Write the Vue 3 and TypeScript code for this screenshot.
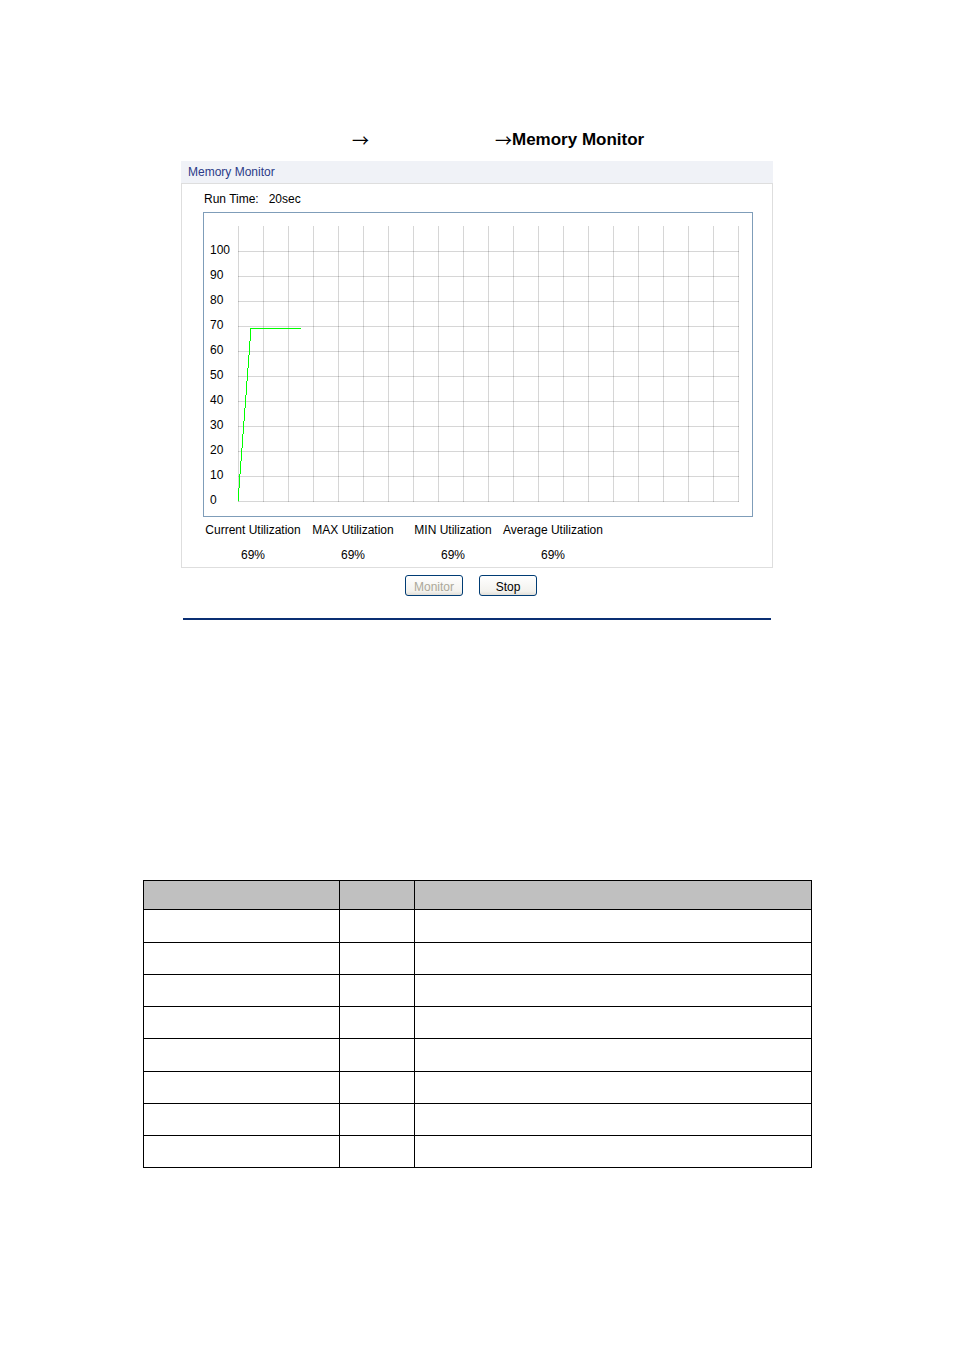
<script setup lang="ts">
interface Stat {
  label: string
  value: string
}

interface Bar {
  x: number
  y: number
  width: number
  height: number
}

const stats: Stat[] = [
  { label: 'Current Utilization', value: '69%' },
  { label: 'MAX Utilization', value: '69%' },
  { label: 'MIN Utilization', value: '69%' },
  { label: 'Average Utilization', value: '69%' },
]

const step = 25
const left = 34
const bottom = 288
const columns = Array.from({ length: 21 }, (_, i) => left + i * step)
const levels = Array.from({ length: 11 }, (_, i) => ({ value: i * 10, y: bottom - i * step }))

const samples: number[] = [0, 69, 69, 69, 69, 69]

// The trace is a stepped line, one column of solid pixels at a time.
function stepped(values: number[]): Bar[] {
  const bars: Bar[] = []
  for (let i = 1; i < values.length; i++) {
    const x0 = Math.round(left + ((i - 1) * step) / 2)
    const x1 = Math.round(left + (i * step) / 2)
    const y0 = Math.floor(bottom - (values[i - 1] * step) / 10)
    const y1 = Math.floor(bottom - (values[i] * step) / 10)
    if (y0 === y1) {
      bars.push({ x: x0, y: y0, width: x1 - x0, height: 1 })
      continue
    }
    for (let x = x0; x < x1; x++) {
      const a = Math.round(y0 + ((y1 - y0) * (x - x0)) / (x1 - x0))
      const b = Math.round(y0 + ((y1 - y0) * (x + 1 - x0)) / (x1 - x0))
      bars.push({ x, y: Math.min(a, b), width: 1, height: Math.max(1, Math.abs(a - b)) })
    }
  }
  return bars
}

const trace = stepped(samples)
const rows = 8
</script>

<template>
  <main class="page">
    <h1 class="crumbs">
      <span class="arrow">→</span>
      <span class="arrow">→</span>
      <span>Memory Monitor</span>
    </h1>

    <section class="monitor">
      <h2 class="title">Memory Monitor</h2>
      <div class="panel">
        <p class="runtime"><span>Run Time:</span><span>20sec</span></p>
        <div class="chart">
          <svg viewBox="0 0 548 303" role="img" aria-label="Memory utilization">
            <g class="grid">
              <rect v-for="x in columns" :key="x" :x="x" y="13" width="1" height="276" />
              <rect v-for="l in levels" :key="l.value" :x="left" :y="l.y" width="501" height="1" />
            </g>
            <text v-for="l in levels" :key="l.value" x="6" :y="l.y + 3">{{ l.value }}</text>
            <g class="trace">
              <rect
                v-for="(b, i) in trace"
                :key="i"
                :x="b.x"
                :y="b.y"
                :width="b.width"
                :height="b.height"
              />
            </g>
          </svg>
        </div>
        <table class="stats">
          <thead>
            <tr>
              <th v-for="s in stats" :key="s.label" scope="col">{{ s.label }}</th>
            </tr>
          </thead>
          <tbody>
            <tr>
              <td v-for="s in stats" :key="s.label">{{ s.value }}</td>
            </tr>
          </tbody>
        </table>
      </div>
      <div class="actions">
        <button type="button" disabled>Monitor</button>
        <button type="button">Stop</button>
      </div>
      <hr class="rule" />
    </section>

    <table class="sheet">
      <colgroup>
        <col class="wide" />
        <col class="narrow" />
        <col />
      </colgroup>
      <thead>
        <tr>
          <th></th>
          <th></th>
          <th></th>
        </tr>
      </thead>
      <tbody>
        <tr v-for="n in rows" :key="n">
          <td></td>
          <td></td>
          <td></td>
        </tr>
      </tbody>
    </table>
  </main>
</template>

<style>
body {
  margin: 0;
  background: #fff;
}
</style>

<style scoped>
.page {
  padding: 128px 142px 182px 143px;
  font-family: "Liberation Sans", Arial, sans-serif;
  font-size: 12px;
  color: #000;
}

.crumbs {
  display: flex;
  height: 24px;
  margin: 0;
  padding-left: 209px;
  font-size: 17px;
  line-height: 24px;
}

.arrow {
  width: 17px;
  font-family: "Noto Sans CJK SC", sans-serif;
  font-weight: 400;
}

.arrow:first-child {
  margin-right: 126px;
}

.monitor {
  margin: 9px 39px 0 38px;
}

.title {
  margin: 0;
  padding: 1px 0 0 7px;
  background: #f0f2f7;
  color: #2b3a87;
  font-size: 12px;
  font-weight: 400;
  line-height: 21px;
}

.panel {
  padding: 0 19px 0 21px;
  border: 1px solid #dedede;
}

.runtime {
  display: flex;
  gap: 10px;
  margin: 0;
  padding: 2px 0 0 1px;
  line-height: 26px;
}

.chart {
  border: 1px solid #7f9db9;
}

.chart svg {
  display: block;
  width: 100%;
  font-size: 12px;
}

.grid {
  fill: #000;
  fill-opacity: 0.16;
  shape-rendering: crispEdges;
}

.trace {
  fill: #00ff00;
  shape-rendering: crispEdges;
}

.stats {
  width: 400px;
  table-layout: fixed;
  border-collapse: collapse;
}

.stats th,
.stats td {
  padding: 2px 0 0;
  font-weight: 400;
  text-align: center;
  line-height: 23px;
  white-space: nowrap;
}

.actions {
  display: flex;
  justify-content: center;
  gap: 16px;
  margin: 7px 12px 0 0;
}

.actions button {
  width: 58px;
  height: 21px;
  padding: 2px 0 0;
  border: 1px solid #003c74;
  border-radius: 3px;
  background: linear-gradient(#fff, #f3f2ee 80%, #e2dfd8);
  color: #000;
  font: 12px "Liberation Sans", Arial, sans-serif;
}

.actions button:disabled {
  color: #aca899;
}

.rule {
  height: 2px;
  margin: 22px 2px 0;
  border: 0;
  background: #0a2f73;
}

.sheet {
  width: 100%;
  margin-top: 260px;
  table-layout: fixed;
  border-collapse: collapse;
}

.sheet .wide {
  width: 196px;
}

.sheet .narrow {
  width: 75px;
}

.sheet th,
.sheet td {
  box-sizing: border-box;
  height: 32px;
  padding: 0;
  border: 1px solid #000;
}

.sheet th {
  height: 29px;
  background: #c0c0c0;
}

.sheet tbody tr:nth-child(4n + 1) td {
  height: 33px;
}
</style>
